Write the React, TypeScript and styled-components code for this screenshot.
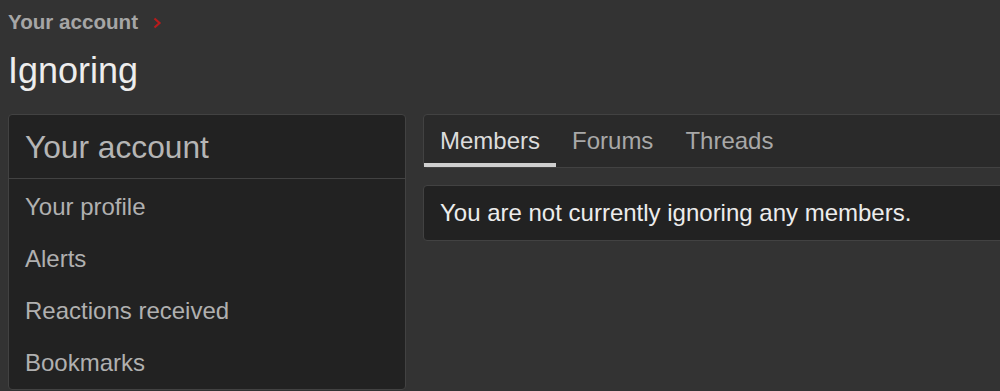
import styled, { createGlobalStyle } from 'styled-components';

const GlobalStyle = createGlobalStyle`
	html, body {
		margin: 0;
		padding: 0;
		background: #333333;
		overflow: hidden;
	}
	body {
		font-family: 'Liberation Sans', Arial, sans-serif;
	}
`;

const Page = styled.div`
	width: 1100px;
	padding: 10px 8px 0;
	box-sizing: border-box;
`;

const Breadcrumb = styled.div`
	display: flex;
	align-items: center;
	gap: 15px;
	height: 24px;
	line-height: 24px;
	font-size: 20.6px;
	font-weight: 700;
	color: #a6a6a6;
`;

const Chevron = styled.svg`
	width: 9px;
	height: 12px;
	margin-top: 1px;
`;

const Title = styled.h1`
	margin: 15px 0 21px;
	font-size: 36px;
	font-weight: 400;
	line-height: 44px;
	color: #ededed;
`;

const Layout = styled.div`
	display: grid;
	grid-template-columns: 398px 640px;
	column-gap: 17px;
	align-items: start;
`;

const Sidebar = styled.nav`
	background: #222222;
	border: 1px solid #424242;
	border-radius: 4px;
	overflow: hidden;
`;

const SidebarHeader = styled.h3`
	margin: 0;
	padding: 14px 16px 13px;
	font-size: 31.7px;
	font-weight: 400;
	line-height: 36px;
	color: #b5b5b5;
	border-bottom: 1px solid #424242;
`;

const SidebarList = styled.ul`
	list-style: none;
	margin: 0;
	padding: 2px 0 0;
`;

const SidebarItem = styled.li`
	padding: 9px 16px;
	font-size: 24px;
	line-height: 34px;
	color: #b0b0b0;
`;

const Main = styled.div`
	display: flex;
	flex-direction: column;
	gap: 17px;
`;

const TabBar = styled.div`
	display: flex;
	background: #2a2a2a;
	border: 1px solid #424242;
	border-radius: 4px;
`;

const Tab = styled.div<{ $active?: boolean }>`
	padding: 11px 16px 8px;
	font-size: 24px;
	line-height: 29px;
	color: ${(p) => (p.$active ? '#dcdcdc' : '#a8a8a8')};
	border-bottom: 4px solid ${(p) => (p.$active ? '#cfcfcf' : 'transparent')};
`;

const Message = styled.div`
	padding: 10px 16px 11px;
	font-size: 24px;
	line-height: 33px;
	color: #ececec;
	background: #222222;
	border: 1px solid #424242;
	border-radius: 4px;
`;

const menu = ['Your profile', 'Alerts', 'Reactions received', 'Bookmarks'];
const tabs = ['Members', 'Forums', 'Threads'];

function App() {
	return (
		<>
			<GlobalStyle />
			<Page>
				<Breadcrumb>
					<span>Your account</span>
					<Chevron viewBox="0 0 9 12">
						<path d="M1.5 1.5 L6.5 6 L1.5 10.5" fill="none" stroke="#b71c1c" strokeWidth="2.2" />
					</Chevron>
				</Breadcrumb>
				<Title>Ignoring</Title>
				<Layout>
					<Sidebar>
						<SidebarHeader>Your account</SidebarHeader>
						<SidebarList>
							{menu.map((m) => (
								<SidebarItem key={m}>{m}</SidebarItem>
							))}
						</SidebarList>
					</Sidebar>
					<Main>
						<TabBar>
							{tabs.map((t, i) => (
								<Tab key={t} $active={i === 0}>
									{t}
								</Tab>
							))}
						</TabBar>
						<Message>You are not currently ignoring any members.</Message>
					</Main>
				</Layout>
			</Page>
		</>
	);
}

export default App;
